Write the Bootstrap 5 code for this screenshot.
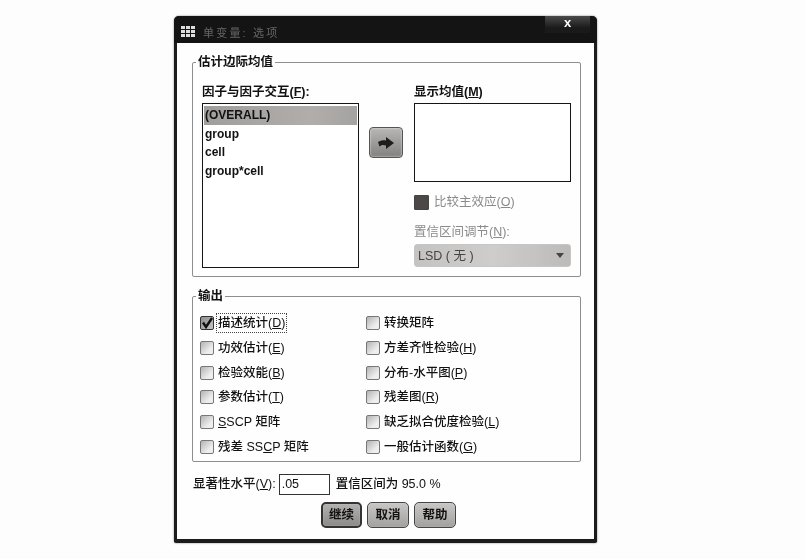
<!DOCTYPE html>
<html lang="zh-CN">
<head>
<meta charset="utf-8">
<title>单变量: 选项</title>
<link rel="stylesheet" href="https://cdn.jsdelivr.net/npm/bootstrap@5.3.0/dist/css/bootstrap.min.css">
<style>
html,body{height:100%;overflow:hidden}
body{background:#fdfdfd;color:#111;font-family:"Liberation Sans","Noto Sans CJK SC",sans-serif;font-size:12.5px;line-height:16px;font-weight:500}
.scan-wrap{padding:16px 0 0 174px}
.dlg{width:423px;height:527px;background:#fefefe;border:solid #1c1c1c;border-width:0 3px 4px 3px;border-radius:5px 5px 2px 2px;box-shadow:0 0 2px #777;filter:blur(.35px)}
.dlg-title{height:27px;background:#141414;margin:0 -3px;border-radius:5px 5px 0 0;padding:10px 0 0 7px;color:#666;font-size:11px;line-height:14px;font-weight:400;letter-spacing:2.2px}
.dlg-close{width:45px;height:17px;margin:-10px 7px 0 auto;background:linear-gradient(#4a4a4a,#1a1a1a 70%);color:#fff;font:700 13px/14px "Liberation Sans",sans-serif;text-align:center;letter-spacing:0}
.dlg-body{padding:0 0 0 15px}
.grp{border:1px solid #8e8e8e;border-radius:2px;width:389px;padding:0;margin:0;min-width:0}
.grp legend{float:none;width:auto;font-size:12.5px;line-height:16px;font-weight:600;margin:0 0 0 3px;padding:0 2px;color:#111}
.grp-a{height:223px;margin-top:11px}
.grp-a-in{padding:15px 0 0 9px;gap:10px}
.cap{height:17px;line-height:15px;margin-bottom:1px;font-weight:600}
.bx{border:1.5px solid #151515;background:#fff}
.bx-l{width:157px;height:165px;padding:2px 1px 1px}
.bx-r{width:157px;height:79px}
.sel-row{height:18.500px;line-height:18.500px;padding-left:1px;font-size:12px;font-weight:600}
.sel-on{background:linear-gradient(90deg,#a09d9b,#b0adab 70%,#a5a3a1)}
.mv{width:34px;height:31px;margin:42px 1px 0 0;border:1px solid #555;border-radius:4px;background:linear-gradient(#b9b7b5,#83817f);box-shadow:inset 0 0 2px #eee}
.dim{color:#8a8a8a;font-weight:400}
.cb{width:14px;height:14px;flex:none;border:1px solid #777;border-radius:2px;background:linear-gradient(135deg,#b3b3b3,#eee 70%)}
.cb-dis{width:15px;height:15px;background:#4b4847;border-color:#444;border-radius:1px}
.cb-on{background:linear-gradient(135deg,#8f8d8c,#c9c7c6);border-color:#333}
.opt-dis{margin-top:12px;gap:5px}
.lbl-dis{margin-top:14px}
.combo{width:157px;height:23px;margin-top:4px;border-radius:3px;padding:0 6px 0 3px;background:linear-gradient(90deg,#c5c3c1,#cfcdcb 50%,#bdbbb9);color:#444;font-weight:400;border:1px solid #c6c6c6}
.tri{width:0;height:0;border:4px solid transparent;border-top:5px solid #444;margin-top:4px}
.grp-b{height:174px;margin-top:11px}
.grp-b-in{padding:7px 0 0 7px}
.colx{width:166px}
.opt{height:24.700px}
.foc{outline:1px dotted #444;outline-offset:1px}
.foot{margin:12px 0 0 1px;height:20px;gap:3px}
.fld{width:51px;height:21px;border:1.5px solid #333;padding:1px 0 0 2px;font-size:12.5px;background:#fff;font-weight:400;color:#111;margin-right:3px}
.acts{margin-top:8px;gap:5px;padding-left:129px}
.push{height:26px;padding:0;border:1px solid #444;border-radius:5px;background:linear-gradient(#c9c7c5,#a3a19f);font-size:12.5px;font-weight:600;color:#111;line-height:22px;box-shadow:inset 0 0 1px #eee}
.push-a{width:41px;background:linear-gradient(#b3b1af,#8d8b89);border:2px solid #333}
.push-b{width:42px}
u{text-underline-offset:1px}
</style>
</head>
<body>
<div class="scan-wrap">
 <div class="dlg d-flex flex-column">
  <div class="dlg-title d-flex align-items-start">
   <svg width="14" height="11" viewBox="0 0 14 11" class="me-2" aria-hidden="true"><g fill="#ddd"><rect x="0" y="0" width="4" height="3"/><rect x="5" y="0" width="4" height="3"/><rect x="10" y="0" width="4" height="3"/><rect x="0" y="4" width="4" height="3"/><rect x="5" y="4" width="4" height="3"/><rect x="10" y="4" width="4" height="3"/><rect x="0" y="8" width="4" height="3"/><rect x="5" y="8" width="4" height="3"/><rect x="10" y="8" width="4" height="3"/></g></svg>
   <span>单变量: 选项</span>
   <div class="dlg-close">x</div>
  </div>
  <div class="dlg-body">
   <fieldset class="grp grp-a">
    <legend>估计边际均值</legend>
    <div class="grp-a-in d-flex">
     <div>
      <div class="cap">因子与因子交互(<u>F</u>):</div>
      <div class="bx bx-l">
       <div class="sel-row sel-on">(OVERALL)</div>
       <div class="sel-row">group</div>
       <div class="sel-row">cell</div>
       <div class="sel-row">group*cell</div>
      </div>
     </div>
     <div class="mv d-flex align-items-center justify-content-center">
      <svg width="16" height="12" viewBox="0 0 16 12" aria-hidden="true"><path d="M0 5 C3 3 6 3 8 3.500 L8 0 L16 6 L8 12 L8 8.500 C5 7.500 3 8 1.500 9.500 Z" fill="#1d1d1d"/></svg>
     </div>
     <div>
      <div class="cap">显示均值(<u>M</u>)</div>
      <div class="bx bx-r"></div>
      <div class="opt-dis d-flex align-items-center dim"><span class="cb cb-dis"></span><span>比较主效应(<u>O</u>)</span></div>
      <div class="dim lbl-dis">置信区间调节(<u>N</u>):</div>
      <div class="combo d-flex align-items-center justify-content-between"><span>LSD ( 无 )</span><span class="tri"></span></div>
     </div>
    </div>
   </fieldset>
   <fieldset class="grp grp-b">
    <legend>输出</legend>
    <div class="grp-b-in d-flex">
     <div class="colx">
      <div class="opt d-flex align-items-center"><span class="cb cb-on d-flex"><svg width="12" height="12" viewBox="0 0 12 12" aria-hidden="true"><path d="M2 5.500 L5 10 L11 1" fill="none" stroke="#111" stroke-width="2.400"/></svg></span><span class="foc ms-1">描述统计(<u>D</u>)</span></div>
      <div class="opt d-flex align-items-center"><span class="cb"></span><span class="ms-1">功效估计(<u>E</u>)</span></div>
      <div class="opt d-flex align-items-center"><span class="cb"></span><span class="ms-1">检验效能(<u>B</u>)</span></div>
      <div class="opt d-flex align-items-center"><span class="cb"></span><span class="ms-1">参数估计(<u>T</u>)</span></div>
      <div class="opt d-flex align-items-center"><span class="cb"></span><span class="ms-1"><u>S</u>SCP 矩阵</span></div>
      <div class="opt d-flex align-items-center"><span class="cb"></span><span class="ms-1">残差 SS<u>C</u>P 矩阵</span></div>
     </div>
     <div>
      <div class="opt d-flex align-items-center"><span class="cb"></span><span class="ms-1">转换矩阵</span></div>
      <div class="opt d-flex align-items-center"><span class="cb"></span><span class="ms-1">方差齐性检验(<u>H</u>)</span></div>
      <div class="opt d-flex align-items-center"><span class="cb"></span><span class="ms-1">分布-水平图(<u>P</u>)</span></div>
      <div class="opt d-flex align-items-center"><span class="cb"></span><span class="ms-1">残差图(<u>R</u>)</span></div>
      <div class="opt d-flex align-items-center"><span class="cb"></span><span class="ms-1">缺乏拟合优度检验(<u>L</u>)</span></div>
      <div class="opt d-flex align-items-center"><span class="cb"></span><span class="ms-1">一般估计函数(<u>G</u>)</span></div>
     </div>
    </div>
   </fieldset>
   <div class="foot d-flex align-items-center">
    <span>显著性水平(<u>V</u>):</span>
    <div class="fld">.05</div>
    <span>置信区间为 95.0 %</span>
   </div>
   <div class="acts d-flex">
    <button type="button" class="btn push push-a">继续</button>
    <button type="button" class="btn push push-b">取消</button>
    <button type="button" class="btn push push-b">帮助</button>
   </div>
  </div>
 </div>
</div>
<script src="https://cdn.jsdelivr.net/npm/bootstrap@5.3.0/dist/js/bootstrap.bundle.min.js"></script>
</body>
</html>
